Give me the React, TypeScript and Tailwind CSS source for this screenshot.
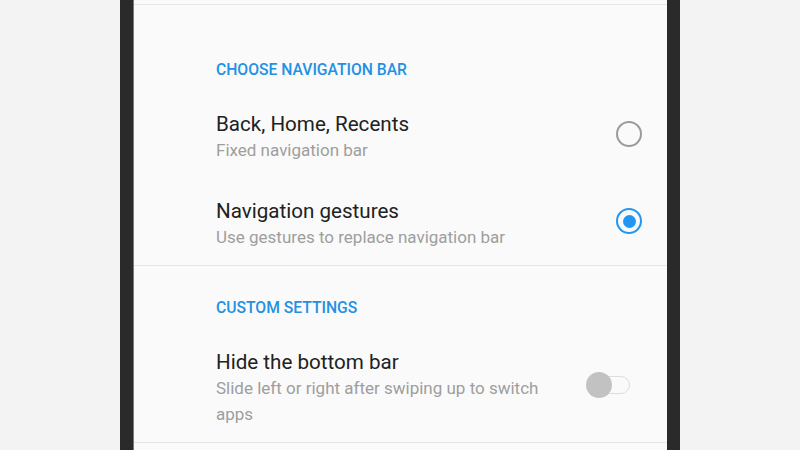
import React from "react";

function Radio({ checked }: { checked?: boolean }) {
  return (
    <div
      className={
        checked
          ? "mt-[10px] flex h-[26px] w-[26px] shrink-0 items-center justify-center rounded-full border-2 border-[#2196f3]"
          : "mt-[10px] h-[26px] w-[26px] shrink-0 rounded-full border-2 border-[#9b9b9b]"
      }
    >
      {checked && <div className="h-[13px] w-[13px] rounded-full bg-[#2196f3]" />}
    </div>
  );
}

function Toggle() {
  return (
    <div className="relative mt-[23px] h-[26px] w-[44px] shrink-0">
      <div className="absolute right-0 top-[4px] h-[18px] w-[39px] rounded-full border-[1.5px] border-[#dedede] bg-[#fafafa]" />
      <div className="absolute left-0 top-0 h-[26px] w-[26px] rounded-full bg-[#c2c2c2]" />
    </div>
  );
}

function Header({ children, top }: { children: React.ReactNode; top: string }) {
  return (
    <div className={`pl-[82px] ${top}`}>
      <p className="text-[15.7px] font-medium leading-[24px] text-[#2391e3]">{children}</p>
    </div>
  );
}

export default function App() {
  return (
    <div
      className="flex h-[450px] w-[800px] justify-center overflow-hidden bg-[#f3f3f3]"
      style={{ fontFamily: "Roboto, 'Noto Sans', sans-serif" }}
    >
      {/* phone bezel */}
      <div className="h-full w-[560px] bg-[#2a2a2a] px-[13px]">
        <div className="flex h-full flex-col border-l border-[#7a7a7a] bg-[#fafafa]">
          <div className="h-[4px] shrink-0" />
          <div className="h-px shrink-0 bg-[#e6e6e6]" />

          <Header top="pt-[53px]">CHOOSE NAVIGATION BAR</Header>

          {/* Back, Home, Recents */}
          <div className="mt-[29px] flex items-start pl-[82px] pr-[25px]">
            <div className="flex-1">
              <p className="text-[20.6px] leading-[26px] text-[#212121]">Back, Home, Recents</p>
              <p className="text-[17px] leading-[26px] text-[#9e9e9e]">Fixed navigation bar</p>
            </div>
            <Radio />
          </div>

          {/* Navigation gestures */}
          <div className="mt-[35px] flex items-start pl-[82px] pr-[25px]">
            <div className="flex-1">
              <p className="text-[20.6px] leading-[26px] text-[#212121]">Navigation gestures</p>
              <p className="text-[17px] leading-[26px] text-[#9e9e9e]">Use gestures to replace navigation bar</p>
            </div>
            <Radio checked />
          </div>

          <div className="mt-[15px] h-px shrink-0 bg-[#e6e6e6]" />

          <Header top="pt-[30px]">CUSTOM SETTINGS</Header>

          {/* Hide the bottom bar */}
          <div className="mt-[29px] flex items-start pl-[82px] pr-[37px]">
            <div className="flex-1">
              <p className="text-[20.6px] leading-[26px] text-[#212121]">Hide the bottom bar</p>
              <p className="w-[345px] text-[17px] leading-[26px] text-[#9e9e9e]">
                Slide left or right after swiping up to switch apps
              </p>
            </div>
            <Toggle />
          </div>

          <div className="mt-[15px] h-px shrink-0 bg-[#e6e6e6]" />
        </div>
      </div>
    </div>
  );
}
